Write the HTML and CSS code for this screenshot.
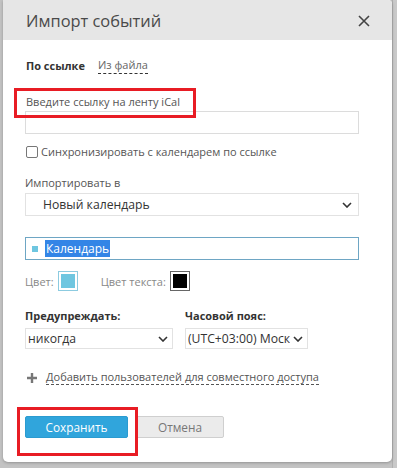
FILE: index.html
```html
<!DOCTYPE html>
<html lang="ru">
<head>
<meta charset="utf-8">
<link rel="stylesheet" href="styles.css">
</head>
<body>
<div class="backdrop">
  <div class="dialog">
    <div class="header">
      <span class="title">Импорт событий</span>
      <svg class="close" width="12" height="12" viewBox="0 0 12 12"><path d="M1 1L11 11M11 1L1 11" stroke="#444" stroke-width="1.6"/></svg>
    </div>
    <div class="body">
      <div class="tabs">
        <span class="tab active">По ссылке</span>
        <span class="tab link">Из файла</span>
      </div>
      <div class="label first">Введите ссылку на ленту iCal</div>
      <div class="input url"></div>
      <label class="check-row"><span class="checkbox"></span>Синхронизировать с календарем по ссылке</label>
      <div class="label import">Импортировать в</div>
      <div class="select wide"><span class="sel-text indent">Новый календарь</span><svg class="chev" width="10" height="6" viewBox="0 0 10 6"><path d="M1 1L5 5L9 1" fill="none" stroke="#333" stroke-width="1.6"/></svg></div>
      <div class="input name"><span class="dot"></span><span class="selected">Календарь</span></div>
      <div class="color-row">
        <span class="muted">Цвет:</span><span class="swatch cyan"></span>
        <span class="muted gap">Цвет текста:</span><span class="swatch black"></span>
      </div>
      <div class="two-col">
        <div class="col warn">
          <div class="bold-label">Предупреждать:</div>
          <div class="select"><span class="sel-text">никогда</span><svg class="chev" width="10" height="6" viewBox="0 0 10 6"><path d="M1 1L5 5L9 1" fill="none" stroke="#333" stroke-width="1.6"/></svg></div>
        </div>
        <div class="col tz">
          <div class="bold-label">Часовой пояс:</div>
          <div class="select"><span class="sel-text clip">(UTC+03:00) Моск</span><svg class="chev" width="10" height="6" viewBox="0 0 10 6"><path d="M1 1L5 5L9 1" fill="none" stroke="#333" stroke-width="1.6"/></svg></div>
        </div>
      </div>
      <div class="add-row">
        <svg class="plus" width="10" height="10" viewBox="0 0 10 10"><path d="M5 0V10M0 5H10" stroke="#777" stroke-width="2.4"/></svg>
        <span class="dashed">Добавить пользователей для совместного доступа</span>
      </div>
      <div class="buttons">
        <button class="btn save">Сохранить</button>
        <button class="btn cancel">Отмена</button>
      </div>
    </div>
    <div class="mark mark-url"></div>
    <div class="mark mark-save"></div>
  </div>
  <div class="side-strip"></div>
</div>
</body>
</html>
```

FILE: styles.css
```css
html, body {
  margin: 0;
  padding: 0;
}
body {
  background: #c3c3c3;
  font-family: "Open Sans", "DejaVu Sans", sans-serif;
  width: 397px;
  height: 468px;
  overflow: hidden;
}
.backdrop {
  display: flex;
  height: 468px;
}
.dialog {
  position: relative;
  margin-left: 3px;
  width: 390px;
  height: 462px;
  background: #fff;
  border-radius: 0 4px 5px 5px;
  overflow: hidden;
  box-shadow: 0 1px 3px rgba(0,0,0,0.25);
}
.side-strip {
  width: 4px;
  height: 468px;
  background: #c9c9c9;
  border-left: 1px solid #b0b0b0;
}
.header {
  height: 40px;
  background: #e6e6e6;
  display: flex;
  align-items: center;
  justify-content: space-between;
  padding: 0 22px 0 23px;
}
.title {
  font-size: 16.4px;
  color: #4a4a4a;
}
.close {
  margin-top: 1px;
}
.body {
  padding: 0 33px 0 22px;
  display: flex;
  flex-direction: column;
  font-size: 11px;
  color: #555;
}
.tabs {
  margin-top: 18px;
  line-height: 16px;
  display: flex;
  gap: 13px;
  padding-left: 1px;
}
.tab.active {
  font-weight: 700;
  color: #333;
}
.tab.link {
  color: #666;
  border-bottom: 1px dashed #333;
  line-height: 14px;
  height: 15px;
}
.label {
  line-height: 16px;
  color: #555;
}
.label.first {
  margin-top: 20px;
  padding-left: 1px;
}
.input {
  height: 21px;
  border: 1px solid #dcdcdc;
  margin-top: 1px;
  display: flex;
  align-items: center;
}
.check-row {
  margin-top: 10px;
  line-height: 16px;
  display: flex;
  align-items: center;
  gap: 3px;
  color: #555;
  padding-left: 1px;
}
.checkbox {
  width: 10px;
  height: 10px;
  border: 1px solid #777;
  border-radius: 2px;
}
.label.import {
  margin-top: 15px;
}
.select {
  height: 20px;
  border: 1px solid #e2e2e2;
  display: flex;
  align-items: center;
  justify-content: space-between;
  padding: 0 6px 0 2px;
  margin-top: 2px;
  overflow: hidden;
}
.select.wide {
  height: 21px;
}
.sel-text {
  font-size: 12.2px;
  color: #333;
  white-space: nowrap;
  overflow: hidden;
}
.sel-text.indent {
  padding-left: 15px;
}
.input.name {
  margin-top: 21px;
  border-color: #6ea6c4;
  padding-left: 6px;
}
.dot {
  width: 6px;
  height: 6px;
  background: #6ec6e0;
  margin-right: 7px;
}
.selected {
  background: #3385e6;
  color: #fff;
  font-size: 12px;
  line-height: 17px;
  padding: 0 1px;
}
.color-row {
  margin-top: 11px;
  display: flex;
  align-items: center;
  height: 20px;
}
.muted {
  color: #888;
}
.muted.gap {
  margin-left: 24px;
}
.swatch {
  width: 14px;
  height: 14px;
  margin-left: 5px;
  border: 2px solid #fff;
}
.swatch.cyan {
  background: #6ec6e0;
  outline: 1px solid #8ccbe0;
}
.swatch.black {
  background: #000;
  outline: 1px solid #666;
  margin-left: 5px;
}
.two-col {
  display: flex;
  gap: 12px;
  margin-top: 17px;
}
.col.warn {
  width: 148px;
}
.col.tz {
  width: 123px;
}
.bold-label {
  font-weight: 700;
  color: #333;
  line-height: 16px;
}
.col .select {
  margin-top: 4px;
  height: 19px;
  padding-right: 4px;
}
.sel-text.clip {
  width: 102px;
  text-overflow: clip;
}
.add-row {
  margin-top: 21px;
  display: flex;
  align-items: center;
  gap: 9px;
  padding-left: 2px;
  line-height: 16px;
}
.dashed {
  color: #555;
  border-bottom: 1px dashed #555;
  line-height: 14px;
}
.buttons {
  margin-top: 31px;
  display: flex;
  gap: 8px;
}
.btn {
  font-family: "Open Sans", "DejaVu Sans", sans-serif;
  font-size: 11.8px;
  height: 22px;
  padding: 0;
  border-radius: 2px;
  cursor: pointer;
}
.btn.save {
  width: 103px;
  background: #30a5dc;
  border: 1px solid #2b9bd0;
  color: #fff;
}
.btn.cancel {
  width: 88px;
  background: #ebebeb;
  border: 1px solid #cfcfcf;
  color: #777;
}
.mark {
  position: absolute;
  border: 3px solid #e81c24;
  box-sizing: border-box;
}
.mark-url {
  left: 11px;
  top: 88px;
  width: 182px;
  height: 30px;
}
.mark-save {
  left: 14px;
  top: 407px;
  width: 121px;
  height: 49px;
}
```
